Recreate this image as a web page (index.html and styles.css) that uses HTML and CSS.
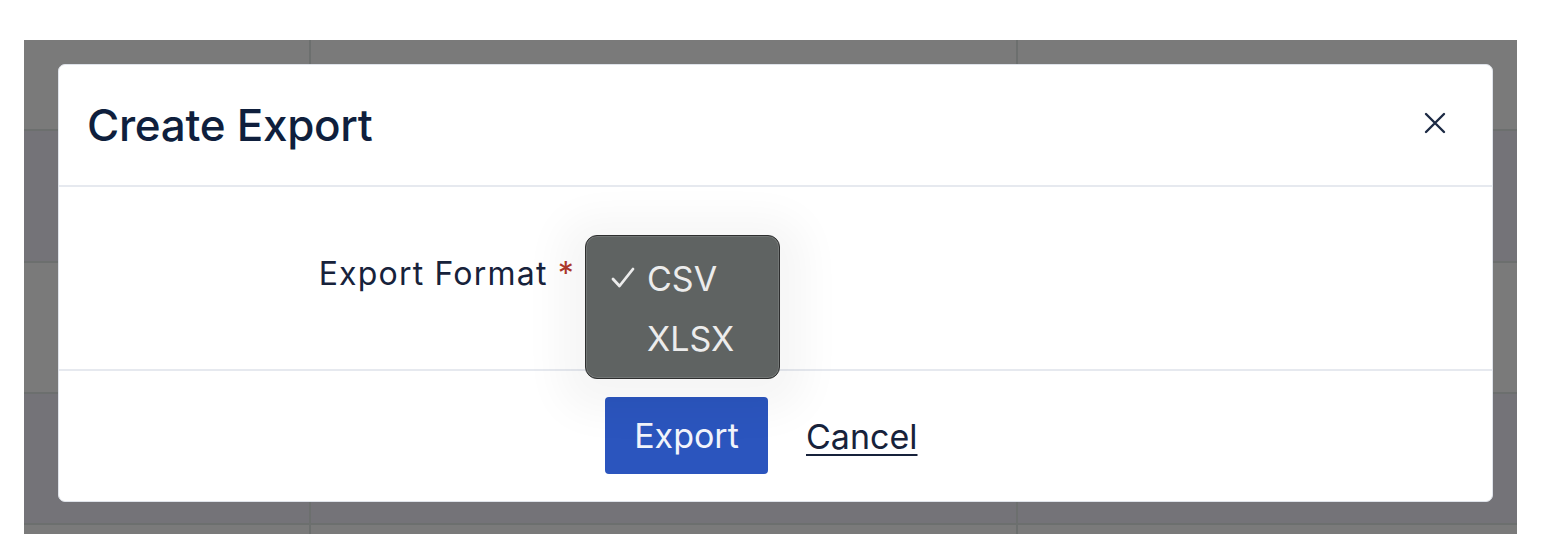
FILE: index.html
```html
<!DOCTYPE html>
<html lang="en">
<head>
<meta charset="utf-8">
<title>Create Export</title>
<link rel="stylesheet" href="styles.css">
</head>
<body>
<div class="backdrop">
  <div class="grid">
    <div class="cell a"></div><div class="cell a"></div><div class="cell a"></div>
    <div class="cell b"></div><div class="cell b"></div><div class="cell b"></div>
    <div class="cell a"></div><div class="cell a"></div><div class="cell a"></div>
    <div class="cell b"></div><div class="cell b"></div><div class="cell b"></div>
    <div class="cell a"></div><div class="cell a"></div><div class="cell a"></div>
  </div>
  <div class="modal">
    <div class="modal-header">
      <h1 class="title">Create Export</h1>
      <button class="close" aria-label="Close">
        <svg width="22" height="22" viewBox="0 0 22 22"><path d="M2 2 L20 20 M20 2 L2 20" stroke="#1c2a44" stroke-width="2.4" stroke-linecap="round" fill="none"/></svg>
      </button>
    </div>
    <div class="modal-body">
      <label class="label">Export Format <span class="req">*</span></label>
      <div class="field"></div>
    </div>
    <div class="modal-footer">
      <button class="btn-primary">Export</button>
      <a class="cancel" href="#">Cancel</a>
    </div>
    <div class="menu">
      <div class="opt"><span class="check"><svg width="24" height="22" viewBox="0 0 24 22"><path d="M2 12 L8.5 19 L22 2" stroke="#ececec" stroke-width="2.8" stroke-linecap="round" stroke-linejoin="round" fill="none"/></svg></span>CSV</div>
      <div class="opt"><span class="check"></span>XLSX</div>
    </div>
  </div>
</div>
</body>
</html>
```
FILE: styles.css
```css
html, body {
  margin: 0;
  padding: 0;
  background: #ffffff;
  font-family: Inter, "Liberation Sans", sans-serif;
}
.backdrop {
  position: relative;
  margin: 40px 0 0 24px;
  width: 1493px;
  height: 494px;
  background: #6c6f6e;
  overflow: hidden;
}
.grid {
  display: grid;
  grid-template-columns: 285px 705px 501px;
  grid-template-rows: 89px 130px 129px 129px 20px;
  column-gap: 2px;
  row-gap: 2px;
  height: 100%;
}
.cell.a { background: #7a7a7a; }
.cell.b { background: #747378; }
.modal {
  position: absolute;
  left: 34px;
  top: 24px;
  width: 1433px;
  height: 436px;
  background: #ffffff;
  border: 1px solid #dfe3ea;
  border-radius: 7px;
  display: flex;
  flex-direction: column;
}
.modal-header {
  height: 120px;
  display: flex;
  align-items: center;
  justify-content: space-between;
  padding: 0 46px 0 28px;
  border-bottom: 2px solid #e6e9ef;
}
.title {
  margin: 0;
  font-size: 44px;
  font-weight: 500;
  color: #0f1f3d;
  letter-spacing: -0.3px;
}
.close {
  background: none;
  border: 0;
  padding: 0;
  width: 22px;
  height: 22px;
  display: flex;
  margin-top: -4px;
}
.modal-body {
  height: 184px;
  display: flex;
  align-items: flex-start;
  border-bottom: 2px solid #e6e9ef;
  box-sizing: border-box;
}
.label {
  width: 516px;
  text-align: right;
  font-size: 32px;
  letter-spacing: 1.2px;
  color: #17223b;
  margin-top: 67px;
}
.req { color: #b0392c; }
.modal-footer {
  flex: 1;
  display: flex;
  align-items: center;
  padding-left: 546px;
  gap: 38px;
}
.btn-primary {
  width: 163px;
  height: 77px;
  background: #2b55be;
  border: 0;
  border-radius: 4px;
  color: #f2f4fb;
  font-family: Inter, "Liberation Sans", sans-serif;
  font-size: 34px;
  margin-top: -2px;
}
.cancel {
  color: #17223b;
  font-size: 34px;
  text-decoration: underline;
  text-underline-offset: 5px;
  text-decoration-thickness: 2px;
}
.menu {
  position: absolute;
  left: 526px;
  top: 170px;
  width: 195px;
  height: 144px;
  background: #5f6362;
  border: 1.5px solid #2e2f2f;
  border-radius: 12px;
  box-shadow: inset 0 0 0 1px rgba(255,255,255,0.12), 0 8px 40px 26px rgba(0,0,0,0.04);
  padding-top: 12px;
  box-sizing: border-box;
}
.opt {
  display: flex;
  align-items: center;
  height: 60px;
  font-size: 34px;
  color: #ececec;
  font-family: Inter, "Liberation Sans", sans-serif;
}
.check {
  width: 36px;
  padding-left: 25px;
  display: inline-flex;
  align-items: center;
}
```
